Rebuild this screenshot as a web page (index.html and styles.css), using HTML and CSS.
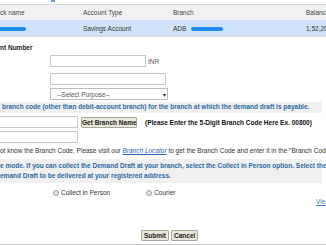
FILE: index.html
```
<!DOCTYPE html>
<html lang="en">
<head>
  <meta charset="UTF-8" />
  <title>Demand Draft Request</title>
  <link rel="stylesheet" href="styles.css">
</head>
<body>
  <div class="page">
    <div class="top-strip"><span class="top-link"></span></div>

    <div class="accounts">
      <div class="acc-row acc-head">
        <span>ck name</span>
        <span>Account Type</span>
        <span>Branch</span>
        <span>Balance</span>
      </div>
      <div class="acc-row acc-selected">
        <span><i class="redact redact-name"></i></span>
        <span>Savings Account</span>
        <span>ADB <i class="redact redact-branch"></i></span>
        <span>1,52,20</span>
      </div>
    </div>

    <div class="section-title">nt Number</div>

    <div class="field-row row-amount">
      <input type="text" class="box box-amount">
      <span class="unit">INR</span>
    </div>
    <div class="field-row row-name">
      <input type="text" class="box box-name">
    </div>
    <div class="field-row row-purpose">
      <div class="select">
        <span>--Select Purpose--</span>
        <span class="arrow">&#9662;</span>
      </div>
    </div>

    <div class="note note-one">
      branch code (other than debit-account branch) for the branch at which the demand draft is payable.
    </div>

    <div class="branch-row">
      <input type="text" class="box box-code">
      <button class="btn btn-get">Get Branch Name</button>
      <span class="hint">(Please Enter the 5-Digit Branch Code Here Ex. 00800)</span>
    </div>
    <div class="branch-name">
      <input type="text" class="box box-code">
    </div>

    <p class="help">ot know the Branch Code, Please visit our <a href="#" class="locator">Branch Locator</a> to get the Branch Code and enter it in the "Branch Code"</p>

    <div class="note note-two">
      e mode. If you can collect the Demand Draft at your branch, select the Collect in Person option. Select the<br>
      emand Draft to be delivered at your registered address.
    </div>

    <div class="delivery">
      <label class="choice"><span class="radio"></span>Collect in Person</label>
      <label class="choice"><span class="radio"></span>Courier</label>
    </div>

    <div class="view-row"><a href="#" class="view">Vie</a></div>

    <div class="actions">
      <button class="btn">Submit</button>
      <button class="btn">Cancel</button>
    </div>
  </div>
</body>
</html>
```

FILE: styles.css
```
* {
  box-sizing: border-box;
}

body {
  margin: 0;
  width: 326px;
  height: 245px;
  overflow: hidden;
  background: #fff;
  font-family: "Liberation Sans", Arial, sans-serif;
  font-size: 6.5px;
  color: #222;
}

.page {
  height: 245px;
  border-bottom: 1px solid #c8c8c8;
  white-space: nowrap;
}

.top-strip {
  height: 4px;
  position: relative;
}

.top-link {
  position: absolute;
  left: 51px;
  top: 0;
  width: 4px;
  height: 2px;
  background: #6d9ad3;
}

.acc-row {
  display: grid;
  grid-template-columns: 83px 90px 133px 1fr;
  align-items: center;
}

.acc-head {
  height: 16px;
  background: #f1f1f1;
  border-top: 1px solid #d6d6d6;
  color: #444;
}

.acc-selected {
  height: 17px;
  background: #cfe3f8;
  border-bottom: 1px solid #d8d8d8;
  color: #333;
}

.redact {
  display: inline-block;
  height: 4px;
  vertical-align: middle;
  background: #1d8ef0;
  border-radius: 2px;
}

.redact-name {
  width: 28px;
  margin-left: -2px;
}

.redact-branch {
  width: 32px;
  margin-left: 3px;
}

.section-title {
  margin-top: 7px;
  font-weight: bold;
  color: #222;
  line-height: 8px;
}

.field-row {
  display: flex;
  align-items: center;
  padding-left: 50px;
}

.row-amount {
  margin-top: 3px;
}

.row-name {
  margin-top: 6px;
}

.row-purpose {
  margin-top: 3px;
}

.box {
  height: 12px;
  border: 1px solid #c9c9c9;
  background: #fff;
  padding: 0;
  margin: 0;
}

.box-amount {
  width: 96px;
}

.box-name {
  width: 116px;
}

.unit {
  margin-left: 2px;
  color: #555;
}

.select {
  width: 118px;
  height: 12px;
  border: 1px solid #bdbdbd;
  display: flex;
  align-items: center;
  justify-content: space-between;
  padding: 0 1px 0 6px;
  color: #555;
}

.arrow {
  font-size: 6px;
  color: #333;
}

.note {
  margin-right: 4px;
  background: #f0f0f0;
  color: #2a6aa6;
  font-weight: bold;
  line-height: 10px;
}

.note-one {
  margin-top: 2px;
  height: 11px;
  padding: 0 0 0 2px;
}

.branch-row {
  display: flex;
  align-items: center;
  margin-top: 3px;
  margin-left: -12px;
}

.box-code {
  width: 90px;
}

.btn {
  height: 11px;
  padding: 0 2px;
  margin: 0;
  font-family: inherit;
  font-size: 6.5px;
  font-weight: bold;
  color: #222;
  background: #ebe8d9;
  border: 1px solid #a9a79a;
  border-radius: 1px;
  line-height: 9px;
}

.btn-get {
  margin-left: 3px;
  width: 56px;
  padding: 0;
}

.hint {
  margin-left: 8px;
  font-weight: bold;
  color: #111;
}

.branch-name {
  margin-top: 3px;
  margin-left: -12px;
}

.help {
  margin: 4px 0 0;
  line-height: 8px;
  color: #333;
}

.locator {
  color: #2a63b8;
  font-style: italic;
}

.note-two {
  margin-top: 4px;
  height: 24px;
  padding-top: 2px;
}

.delivery {
  display: flex;
  margin-top: 6px;
  padding-left: 53px;
  line-height: 7px;
}

.choice {
  display: flex;
  align-items: center;
  color: #333;
}

.choice + .choice {
  margin-left: 36px;
}

.radio {
  width: 6px;
  height: 6px;
  margin-right: 2px;
  border-radius: 50%;
  border: 1px solid #9a9a9a;
  background: #e6e6e6;
}

.view-row {
  margin-top: 2px;
  padding-left: 316px;
  line-height: 7px;
}

.view {
  color: #4a78c0;
}

.actions {
  display: flex;
  gap: 2px;
  margin-top: 25px;
  padding-left: 141px;
}
```
